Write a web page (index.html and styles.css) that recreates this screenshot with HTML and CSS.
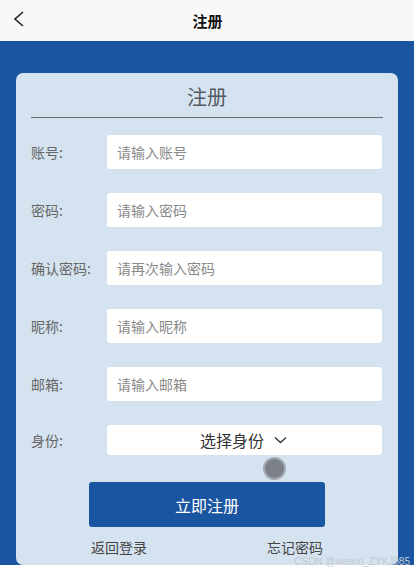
FILE: index.html
```html
<!DOCTYPE html>
<html lang="zh">
<head>
<meta charset="utf-8">
<link rel="stylesheet" href="styles.css">
</head>
<body>
<header class="topbar">
  <svg class="back" width="12" height="16" viewBox="0 0 12 16"><path d="M10 1 L2 8 L10 15" fill="none" stroke="#222" stroke-width="1.6"/></svg>
  <div class="topbar-title">注册</div>
</header>
<main class="main">
  <section class="card">
    <div class="card-title">注册</div>
    <div class="row"><label class="label">账号:</label><div class="input">请输入账号</div></div>
    <div class="row"><label class="label">密码:</label><div class="input">请输入密码</div></div>
    <div class="row"><label class="label">确认密码:</label><div class="input">请再次输入密码</div></div>
    <div class="row"><label class="label">昵称:</label><div class="input">请输入昵称</div></div>
    <div class="row"><label class="label">邮箱:</label><div class="input">请输入邮箱</div></div>
    <div class="row"><label class="label">身份:</label>
      <div class="select"><span>选择身份</span>
        <svg width="13" height="8" viewBox="0 0 13 8"><path d="M1 1.5 L6.5 6.5 L12 1.5" fill="none" stroke="#333" stroke-width="1.3"/></svg>
      </div>
    </div>
    <div class="actions">
      <span class="touch"></span>
      <button class="submit">立即注册</button>
      <div class="links"><span>返回登录</span><span>忘记密码</span></div>
    </div>
  </section>
</main>
<div class="watermark">CSDN @weixin_ZYKJ985</div>
</body>
</html>
```
FILE: styles.css
```css
* { box-sizing: border-box; }
html, body { margin: 0; padding: 0; background: #fff; }
body {
  font-family: "Noto Sans CJK SC", "Noto Sans", sans-serif;
  width: 414px;
  height: 574px;
  overflow: hidden;
  position: relative;
}
.topbar {
  height: 41px;
  background: #f8f8f8;
  display: flex;
  align-items: center;
  justify-content: center;
  position: relative;
}
.back { position: absolute; left: 13px; top: 11px; }
.topbar-title { font-size: 15px; font-weight: 700; color: #111; margin-left: 1px; }
.main {
  background: #1a55a2;
  height: 524px;
  padding: 32px 16px 0;
}
.card {
  background: #d5e3f0;
  border-radius: 7px;
  height: 492px;
  padding: 10px 15px 0;
}
.card-title {
  font-size: 20px;
  line-height: 28px;
  height: 35px;
  padding-bottom: 6px;
  text-align: center;
  color: #555b63;
  border-bottom: 1px solid #6a6d72;
}
.row {
  display: flex;
  align-items: center;
  margin-top: 24px;
}
.card-title + .row { margin-top: 17px; }
.label {
  width: 76px;
  font-size: 14px;
  color: #666;
}
.input {
  width: 275px;
  height: 34px;
  background: #fff;
  border-radius: 3px;
  padding-left: 10px;
  display: flex;
  align-items: center;
  font-size: 14px;
  color: #8a8a8a;
}
.select {
  width: 275px;
  height: 30px;
  background: #fff;
  border-radius: 3px;
  display: flex;
  align-items: center;
  justify-content: center;
  gap: 10px;
  font-size: 16px;
  color: #333;
  padding-right: 2px;
}
.actions {
  position: relative;
  display: flex;
  flex-direction: column;
  align-items: center;
  padding-top: 27px;
}
.touch {
  position: absolute;
  left: 232px;
  top: 2px;
  width: 23px;
  height: 23px;
  border-radius: 50%;
  background: #7b8089;
  border: 2px solid #a5aab2;
}
.submit {
  width: 236px;
  height: 45px;
  border: none;
  border-radius: 3px;
  background: #1a55a2;
  color: #fff;
  font-family: inherit;
  font-size: 16px;
}
.links {
  width: 236px;
  display: flex;
  justify-content: space-between;
  padding: 0 2px;
  margin-top: 10px;
  font-size: 14px;
  line-height: 20px;
  color: #444;
}
.watermark {
  position: absolute;
  right: 4px;
  top: 556px;
  font-family: "Liberation Sans", sans-serif;
  font-size: 10px;
  color: #c3c8d0;
}
```
